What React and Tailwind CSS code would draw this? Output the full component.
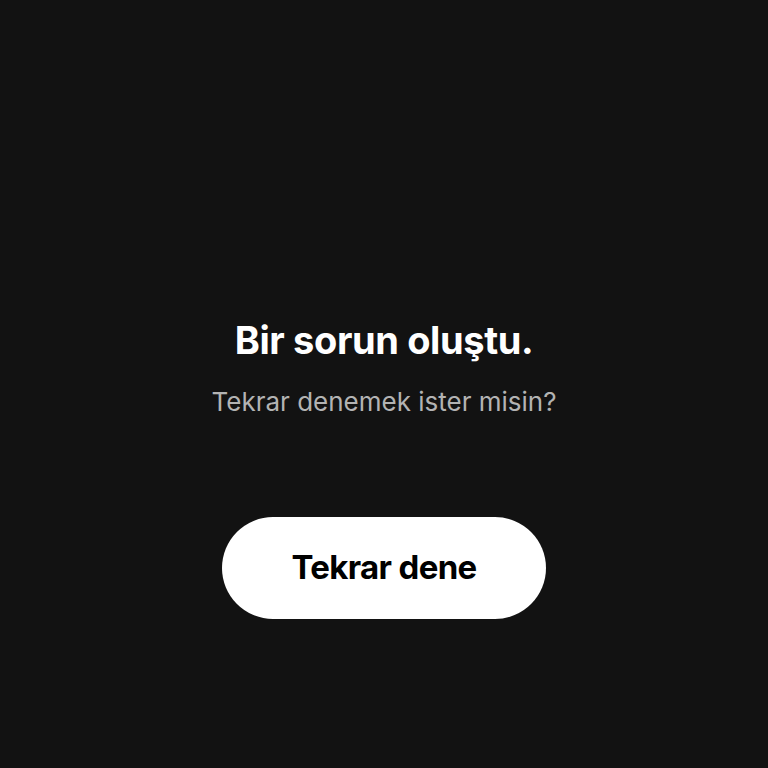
export default function App() {
  return (
    <div className="min-h-screen w-full bg-[#121212] flex flex-col items-center pt-[315px] font-['Inter',sans-serif]">
      <h1 className="text-white text-[38px] leading-[50px] font-bold tracking-[-0.01em]">Bir sorun oluştu.</h1>
      <p className="mt-[20px] text-[#b3b3b3] text-[26px] leading-[34px]">Tekrar denemek ister misin?</p>
      <button className="mt-[98px] w-[324px] h-[102px] rounded-full bg-white text-black text-[33px] font-bold tracking-[-0.02em]">
        Tekrar dene
      </button>
    </div>
  );
}
